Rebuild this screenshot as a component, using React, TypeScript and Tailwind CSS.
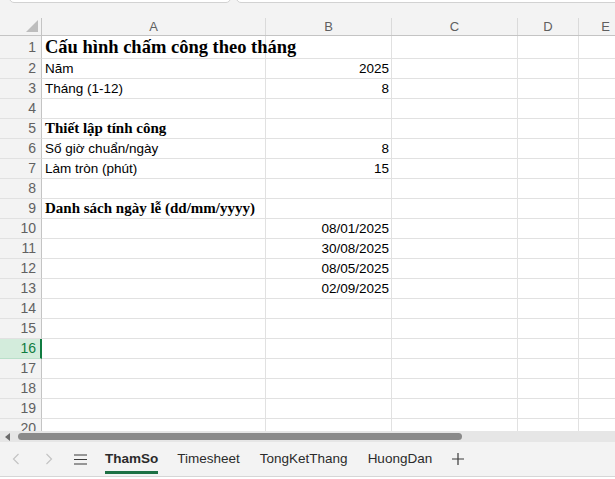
import React from 'react';

const COLS = [
  { key: 'A', w: 224 },
  { key: 'B', w: 126 },
  { key: 'C', w: 126 },
  { key: 'D', w: 61 },
  { key: 'E', w: 54 },
];

type Cell = { text: string; kind?: 'title' | 'section' | 'num' };
type Row = { n: number; h: number; a?: Cell; b?: Cell };

const rows: Row[] = [
  { n: 1, h: 23, a: { text: 'Cấu hình chấm công theo tháng', kind: 'title' } },
  { n: 2, h: 20, a: { text: 'Năm' }, b: { text: '2025', kind: 'num' } },
  { n: 3, h: 20, a: { text: 'Tháng (1-12)' }, b: { text: '8', kind: 'num' } },
  { n: 4, h: 20 },
  { n: 5, h: 20, a: { text: 'Thiết lập tính công', kind: 'section' } },
  { n: 6, h: 20, a: { text: 'Số giờ chuẩn/ngày' }, b: { text: '8', kind: 'num' } },
  { n: 7, h: 20, a: { text: 'Làm tròn (phút)' }, b: { text: '15', kind: 'num' } },
  { n: 8, h: 20 },
  { n: 9, h: 20, a: { text: 'Danh sách ngày lễ (dd/mm/yyyy)', kind: 'section' } },
  { n: 10, h: 20, b: { text: '08/01/2025', kind: 'num' } },
  { n: 11, h: 20, b: { text: '30/08/2025', kind: 'num' } },
  { n: 12, h: 20, b: { text: '08/05/2025', kind: 'num' } },
  { n: 13, h: 20, b: { text: '02/09/2025', kind: 'num' } },
  { n: 14, h: 20 },
  { n: 15, h: 20 },
  { n: 16, h: 20 },
  { n: 17, h: 20 },
  { n: 18, h: 20 },
  { n: 19, h: 20 },
  { n: 20, h: 20 },
];

function CellText({ c }: { c?: Cell }) {
  if (!c) return null;
  if (c.kind === 'title')
    return (
      <span className="whitespace-nowrap pl-[3px] font-['Liberation_Serif',serif] text-[18.5px] font-bold leading-none text-black">
        {c.text}
      </span>
    );
  if (c.kind === 'section')
    return (
      <span className="whitespace-nowrap pl-[3px] font-['Liberation_Serif',serif] text-[15px] font-bold leading-none text-black">
        {c.text}
      </span>
    );
  return <span className="whitespace-nowrap pl-[3px] pr-[2px] text-[13.5px] leading-none text-black">{c.text}</span>;
}

export default function App() {
  return (
    <div className="relative h-[479px] w-[615px] overflow-hidden bg-white font-['Liberation_Sans',Arial,sans-serif]">
      {/* toolbar remnant */}
      <div className="relative h-[18px] bg-[#f3f3f3]">
        <div className="absolute left-[9px] top-[-8px] h-[11px] w-[222px] rounded-b-[5px] border border-[#d2d2d2] bg-white" />
        <div className="absolute left-[236px] top-[-8px] h-[11px] w-[400px] rounded-b-[5px] border border-[#d2d2d2] bg-white" />
      </div>

      {/* column headers */}
      <div className="flex h-[18px] overflow-hidden border-b border-[#c4c4c4] bg-[#f3f3f3]">
        <div className="relative w-[42px] shrink-0 border-r border-[#c4c4c4]">
          <div className="absolute bottom-[3px] right-[3px] h-0 w-0 border-b-[12px] border-l-[12px] border-b-[#bdbdbd] border-l-transparent" />
        </div>
        {COLS.map((c) => (
          <div
            key={c.key}
            style={{ width: c.w }}
            className="flex shrink-0 items-center justify-center border-r border-[#dadada] text-[13px] leading-none text-[#5f5f5f]"
          >
            {c.key}
          </div>
        ))}
      </div>

      {/* grid */}
      <div className="h-[395px] overflow-hidden">
        {rows.map((r) => {
          const active = r.n === 16;
          return (
            <div key={r.n} style={{ height: r.h }} className="flex">
              <div
                className={
                  active
                    ? 'flex w-[42px] shrink-0 items-center justify-end border-b border-r-2 border-b-[#b9dfc9] border-r-[#107c41] bg-[#d3ecdc] pr-[4px] text-[14px] text-[#107c41]'
                    : 'flex w-[42px] shrink-0 items-center justify-end border-b border-r border-b-[#e1e1e1] border-r-[#c4c4c4] bg-[#f3f3f3] pr-[5px] text-[14px] text-[#616161]'
                }
              >
                {r.n}
              </div>
              <div className="flex w-[224px] shrink-0 items-center border-b border-r border-[#e1e1e1]">
                <CellText c={r.a} />
              </div>
              <div className="flex w-[126px] shrink-0 items-center justify-end border-b border-r border-[#e1e1e1]">
                <CellText c={r.b} />
              </div>
              <div className="w-[126px] shrink-0 border-b border-r border-[#e1e1e1]" />
              <div className="w-[61px] shrink-0 border-b border-r border-[#e1e1e1]" />
              <div className="min-w-0 flex-1 border-b border-[#e1e1e1]" />
            </div>
          );
        })}
      </div>

      {/* horizontal scrollbar */}
      <div className="relative flex h-[11px] items-center bg-[#e6e6e6]">
        <div className="ml-[5px] h-0 w-0 border-y-[4px] border-r-[5px] border-y-transparent border-r-[#6b6b6b]" />
        <div className="ml-[8px] h-[7px] w-[444px] rounded-full bg-[#8a8a8a]" />
      </div>

      {/* sheet tabs */}
      <div className="flex h-[35px] items-center border-b border-[#d6d6d6] bg-[#f3f3f3] text-[13.5px]">
        <svg width="8" height="12" viewBox="0 0 8 12" className="ml-[12px]">
          <path d="M6.5 1 L1.5 6 L6.5 11" fill="none" stroke="#c4c4c4" strokeWidth="1.2" />
        </svg>
        <svg width="8" height="12" viewBox="0 0 8 12" className="ml-[25px]">
          <path d="M1.5 1 L6.5 6 L1.5 11" fill="none" stroke="#c4c4c4" strokeWidth="1.2" />
        </svg>
        <svg width="13" height="11" viewBox="0 0 13 11" className="ml-[21px]">
          <path d="M0 1 H13 M0 5.5 H13 M0 10 H13" stroke="#3b3b3b" strokeWidth="1.2" />
        </svg>
        <div className="relative ml-[18px] flex h-full items-center">
          <span className="font-bold text-[#2b2b2b]">ThamSo</span>
          <div className="absolute bottom-[2px] left-0 right-0 h-[3px] bg-[#1e7145]" />
        </div>
        <span className="ml-[19px] text-[#2b2b2b]">Timesheet</span>
        <span className="ml-[20px] text-[#2b2b2b]">TongKetThang</span>
        <span className="ml-[20px] text-[#2b2b2b]">HuongDan</span>
        <svg width="12" height="12" viewBox="0 0 12 12" className="ml-[20px]">
          <path d="M6 0 V12 M0 6 H12" stroke="#3b3b3b" strokeWidth="1.2" />
        </svg>
      </div>
    </div>
  );
}
